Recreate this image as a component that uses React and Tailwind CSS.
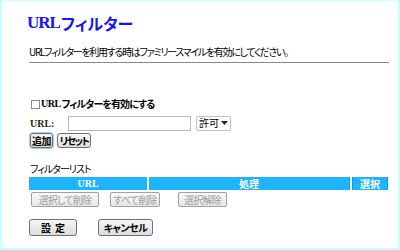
import React from "react";

const jp = "font-['Noto_Sans_CJK_JP',sans-serif] [font-feature-settings:'palt']";
const serif = "font-['Liberation_Serif',serif]";

const GrayButton = ({ children, className = "" }) => (
  <button
    type="button"
    disabled
    className={`h-[15px] px-0 whitespace-nowrap flex items-center justify-center rounded-[2px] border border-[#a0a0a0] bg-gradient-to-b from-[#fafafa] to-[#e6e6e6] text-[10px] leading-none tracking-[-0.8px] text-[#9a9a9a] ${className}`}
  >
    {children}
  </button>
);

const Button = ({ children, className = "" }) => (
  <button
    type="button"
    className={`px-0 whitespace-nowrap flex items-center justify-center rounded-[3px] border border-[#707070] bg-gradient-to-b from-[#f6f6f6] to-[#dddddd] text-[10px] leading-none text-black font-bold ${className}`}
  >
    {children}
  </button>
);

export default function App() {
  return (
    <div
      className={`w-[400px] h-[250px] bg-white border-t border-r-2 border-b-2 border-l-2 border-[#c8ffff] pl-[25px] pr-[9px] text-black ${jp}`}
    >
      {/* Title */}
      <h1 className="mt-[10px] h-[20px] flex items-end text-[16px] leading-none font-bold text-[#1414ff]">
        <span className={`${serif} text-[17px] tracking-[-1px] mr-[1px]`}>URL</span>
        <span>フィルター</span>
      </h1>

      {/* Description */}
      <p className="mt-[15px] pl-[2px] text-[10px] leading-[12px] tracking-[-1.3px] whitespace-nowrap">
        URLフィルターを利用する時はファミリースマイルを有効にしてください。
      </p>
      <div className="mt-[4px] ml-[2px] h-px bg-[#8a8a8a]"></div>

      {/* Enable */}
      <label className="mt-[36px] pl-[4px] flex items-center gap-[1px] text-[10px] font-bold leading-none tracking-[-0.9px]">
        <span className="w-[9px] h-[9px] border border-[#8a8a8a] bg-white"></span>
        <span className={`${serif} text-[10px] tracking-[-0.5px]`}>URL</span>
        <span>フィルターを有効にする</span>
      </label>

      {/* URL row */}
      <div className="mt-[6px] pl-[3px] flex items-center h-[16px]">
        <span className={`${serif} w-[38px] text-[10px] font-bold text-[#3a1a00]`}>URL:</span>
        <div className="w-[123px] h-[15px] border border-[#b8b8b8] bg-white"></div>
        <div className="ml-[5px] w-[35px] h-[15px] border border-[#c0c0c0] rounded-[2px] bg-white flex items-center justify-between px-[2px] text-[10px] leading-none">
          <span>許可</span>
          <svg width="7" height="4" viewBox="0 0 7 4"><path d="M0 0h7L3.5 4z" fill="#222" /></svg>
        </div>
      </div>

      {/* Add / Reset */}
      <div className="mt-[2px] pl-[3px] flex items-center gap-[4px]">
        <Button className="h-[15px] w-[23px] tracking-[-0.5px] border-[#3a8fd6] shadow-[0_0_0_1px_#9cd0f5]">追加</Button>
        <Button className="h-[15px] w-[34px] tracking-[-1.5px]">リセット</Button>
      </div>

      {/* Filter list */}
      <div className="mt-[15px] pl-[3px] text-[10px] leading-[12px] tracking-[-1px]">フィルターリスト</div>
      <div className="mt-[2px] ml-[2px] mr-[1px] flex h-[13px] gap-[2px] text-white text-[10px] font-bold leading-none">
        <div className={`${serif} w-[118px] bg-[#1eb4ff] flex items-center justify-center`}>URL</div>
        <div className="w-[201px] bg-[#1eb4ff] flex items-center justify-center border-r border-[#0b9ae6]">処理</div>
        <div className="flex-1 bg-[#1eb4ff] flex items-center justify-center border-x border-[#0b9ae6]">選択</div>
      </div>
      <div className="mt-[2px] pl-[4px] flex items-center">
        <GrayButton className="w-[68px]">選択して削除</GrayButton>
        <GrayButton className="ml-[11px] w-[50px]">すべて削除</GrayButton>
        <GrayButton className="ml-[18px] w-[49px]">選択解除</GrayButton>
      </div>

      {/* Submit */}
      <div className="mt-[12px] pl-[2px] flex items-center gap-[21px]">
        <Button className="h-[17px] w-[48px] tracking-[4px] pl-[4px]">設定</Button>
        <Button className="h-[17px] w-[55px] tracking-[-0.5px]">キャンセル</Button>
      </div>
    </div>
  );
}
